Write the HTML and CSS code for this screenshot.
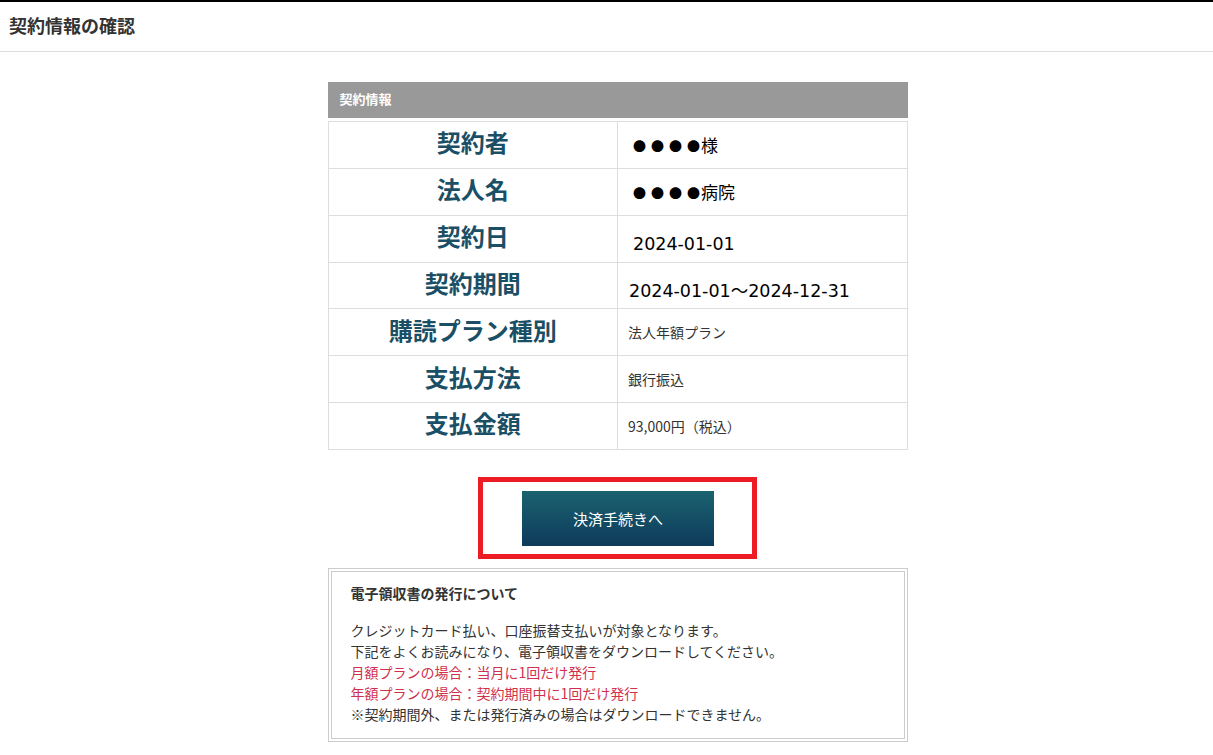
FILE: index.html
```html
<!DOCTYPE html>
<html lang="ja">

<head>
    <meta charset="UTF-8">
    <meta name="viewport" content="width=device-width, initial-scale=1.0">
    <title>契約情報の確認</title>
    <link rel="stylesheet" href="styles.css">
</head>

<body>

    <!-- ページタイトル -->
    <div class="page-header">
        <h1>契約情報の確認</h1>
    </div>

    <div class="page-main">
        <div class="contract-wrap">

            <!-- 契約情報テーブル -->
            <div class="section-title">契約情報</div>
            <table class="contract-table">
                <tr>
                    <th>契約者</th>
                    <td class="val-large val-cjk"><span class="dots">●●●</span><span class="dots dots-last">●</span>様</td>
                </tr>
                <tr>
                    <th>法人名</th>
                    <td class="val-large val-cjk"><span class="dots">●●●</span><span class="dots dots-last">●</span>病院</td>
                </tr>
                <tr>
                    <th>契約日</th>
                    <td class="val-large val-low">2024-01-01</td>
                </tr>
                <tr>
                    <th>契約期間</th>
                    <td class="val-large val-low val-tight">2024-01-01～2024-12-31</td>
                </tr>
                <tr>
                    <th>購読プラン種別</th>
                    <td>法人年額プラン</td>
                </tr>
                <tr>
                    <th>支払方法</th>
                    <td>銀行振込</td>
                </tr>
                <tr>
                    <th>支払金額</th>
                    <td>93,000円（税込）</td>
                </tr>
            </table>

            <!-- 決済ボタン -->
            <div class="action-row">
                <div class="action-frame">
                    <a href="#" class="btn-pay">決済手続きへ</a>
                </div>
            </div>

            <!-- 電子領収書の案内 -->
            <div class="notice-box">
                <p class="notice-title">電子領収書の発行について</p>
                <p class="notice-body">
                    クレジットカード払い、口座振替支払いが対象となります。<br>
                    下記をよくお読みになり、電子領収書をダウンロードしてください。<br>
                    <span class="notice-red">月額プランの場合：当月に1回だけ発行</span><br>
                    <span class="notice-red">年額プランの場合：契約期間中に1回だけ発行</span><br>
                    ※契約期間外、または発行済みの場合はダウンロードできません。
                </p>
            </div>

        </div>
    </div>

</body>

</html>
```

FILE: styles.css
```css
/* 共通 */
html,
body {
    margin: 0;
    padding: 0;
    background: #fff;
}

body {
    font-family: "Noto Sans CJK JP", "Noto Sans", sans-serif;
    color: #333;
    border-top: 2px solid #000;
}

/* ページタイトル */
.page-header {
    height: 49px;
    border-bottom: 1px solid #ddd;
    display: flex;
    align-items: center;
    padding-left: 9px;
}

.page-header h1 {
    margin: 0;
    font-size: 18px;
    font-weight: 700;
    color: #333;
    line-height: 1;
    position: relative;
    top: -2px;
}

/* メイン */
.page-main {
    padding: 30px 0 0 22px;
}

.contract-wrap {
    width: 580px;
    margin: 0 auto;
}

.section-title {
    background-color: #999;
    color: #fff;
    font-size: 13px;
    font-weight: 700;
    height: 36px;
    line-height: 34px;
    padding-left: 12px;
    margin-bottom: 3px;
}

/* 契約情報テーブル */
.contract-table {
    width: 100%;
    border-collapse: collapse;
    table-layout: fixed;
}

.contract-table tr {
    height: 46.85px;
}

.contract-table th,
.contract-table td {
    box-sizing: border-box;
    border: 1px solid #ddd;
    height: 46.85px;
    padding: 0;
    vertical-align: middle;
    line-height: 20px;
}

.contract-table th {
    width: 50%;
    font-size: 24px;
    font-weight: 700;
    color: #1a4f66;
    text-align: center;
    line-height: 24px;
    padding-bottom: 5px;
}

.contract-table td {
    font-size: 14px;
    color: #333;
    padding-left: 10px;
}

.contract-table td.val-large {
    font-family: "DejaVu Sans", "Noto Sans CJK JP", sans-serif;
    font-size: 17.5px;
    color: #000;
    padding-left: 15px;
}

.contract-table td.val-cjk {
    font-family: "Noto Sans CJK JP", sans-serif;
    font-size: 17px;
    padding-top: 2px;
}

/* ●の伏字 */
.dots {
    font-size: 13px;
    letter-spacing: 5px;
    vertical-align: 1px;
}

.dots-last {
    letter-spacing: 1px;
}

.contract-table td.val-low {
    padding-top: 11px;
}

.contract-table td.val-tight {
    padding-left: 11px;
}

/* 決済ボタン */
.action-row {
    display: flex;
    justify-content: center;
    padding-top: 27px;
}

.action-frame {
    border: 5px solid #ed1c24;
    padding: 9px 38px 8px 39px;
}

.btn-pay {
    display: block;
    width: 192px;
    height: 55px;
    line-height: 55px;
    text-align: center;
    color: #fff;
    font-size: 15px;
    text-decoration: none;
    background: linear-gradient(to bottom, #1a6270, #0e3b5b);
}

/* 電子領収書の案内 */
.notice-box {
    margin-top: 9px;
    border: 4px double #ccc;
    padding: 11px 19px 13px;
}

.notice-box p {
    margin: 0;
    font-size: 14px;
    line-height: 21px;
}

.notice-title {
    font-weight: 700;
    font-size: 13px;
    margin-bottom: 16px !important;
}

.notice-body {
    color: #333;
}

.notice-red {
    color: #d0304c;
}
```
